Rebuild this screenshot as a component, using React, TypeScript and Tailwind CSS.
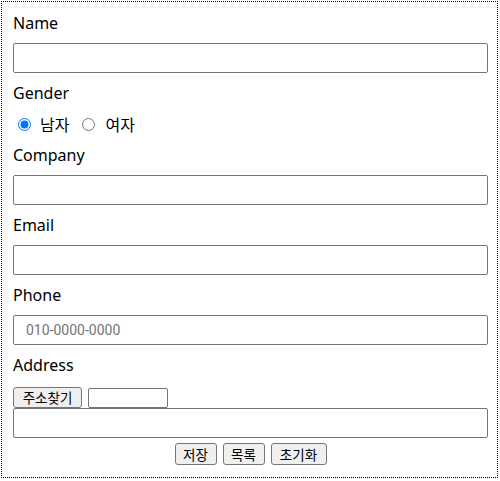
import React from "react";

const font = { fontFamily: '"Noto Sans", "Noto Sans CJK KR", sans-serif' };

function Label({ children }: { children: React.ReactNode }) {
  return <div className="h-[24px] leading-[24px] text-[16px] text-black">{children}</div>;
}

function TextInput({ placeholder }: { placeholder?: string }) {
  return (
    <input
      type="text"
      placeholder={placeholder}
      className="block w-[475px] h-[30px] border border-[#767676] rounded-[2px] px-[12px] text-[14px] placeholder:text-[#757575] outline-none"
      style={{ fontFamily: 'Roboto, "Noto Sans CJK KR", sans-serif' }}
    />
  );
}

function Btn({ children, w }: { children: React.ReactNode; w: string }) {
  return (
    <button
      className={`h-[22px] ${w} bg-[#efefef] border border-[#767676] rounded-[3px] text-[13.5px] leading-[18px] text-black flex items-center justify-center`}
      style={{ fontFamily: '"Noto Sans CJK KR", sans-serif' }}
    >
      {children}
    </button>
  );
}

export default function App() {
  return (
    <div className="w-[500px] h-[481px] bg-white pl-[1px] pt-[1px]" style={font}>
      <div className="w-[497px] h-[477px] border border-dotted border-black pt-[9px] pl-[11px] flex flex-col">
        <Label>Name</Label>
        <div className="mt-[8px]"><TextInput /></div>
        <div className="mt-[8px]"><Label>Gender</Label></div>
        <div className="mt-[8px] h-[22px] flex items-center text-[16px]">
          <input type="radio" name="g" defaultChecked className="w-[13px] h-[13px] ml-[5px] mr-[9px] accent-[#0075ff]" />
          <span style={{ fontFamily: '"Noto Sans CJK KR", sans-serif' }}>남자</span>
          <input type="radio" name="g" className="w-[13px] h-[13px] ml-[13px] mr-[10px]" />
          <span style={{ fontFamily: '"Noto Sans CJK KR", sans-serif' }}>여자</span>
        </div>
        <div className="mt-[8px]"><Label>Company</Label></div>
        <div className="mt-[8px]"><TextInput /></div>
        <div className="mt-[8px]"><Label>Email</Label></div>
        <div className="mt-[8px]"><TextInput /></div>
        <div className="mt-[8px]"><Label>Phone</Label></div>
        <div className="mt-[8px]"><TextInput placeholder="010-0000-0000" /></div>
        <div className="mt-[8px]"><Label>Address</Label></div>
        <div className="mt-[10px] flex items-end gap-[6px]">
          <button
            className="h-[21px] w-[69px] bg-[#efefef] border border-[#767676] rounded-[3px] text-[13.5px] text-black flex items-center justify-center"
            style={{ fontFamily: '"Noto Sans CJK KR", sans-serif' }}
          >
            주소찾기
          </button>
          <input type="text" className="w-[80px] h-[20px] border border-[#767676] rounded-[2px] outline-none" />
        </div>
        <TextInput />
        <div className="mt-[5px] w-[475px] flex justify-center gap-[6px]">
          <Btn w="w-[42px]">저장</Btn>
          <Btn w="w-[42px]">목록</Btn>
          <Btn w="w-[56px]">초기화</Btn>
        </div>
      </div>
    </div>
  );
}
